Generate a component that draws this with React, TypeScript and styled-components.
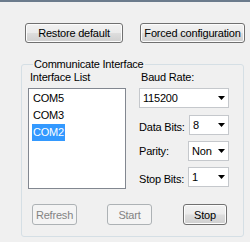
import React from "react";
import styled, { createGlobalStyle } from "styled-components";

const Global = createGlobalStyle`
  html, body { margin: 0; padding: 0; background: #f0f0f0; }
`;

const Window = styled.div`
  width: 250px;
  height: 242px;
  box-sizing: border-box;
  border-top: 2px solid #6b7b8c;
  background: #f0f0f0;
  padding: 21px 0 0 21px;
  font-family: "Liberation Sans", Arial, sans-serif;
  font-size: 11px;
  letter-spacing: -0.2px;
  color: #000;
  overflow: hidden;
`;

const TopBar = styled.div`
  display: flex;
  gap: 17px;
  padding-left: 4px;
`;

const Button = styled.button<{ $w: number; $h?: number }>`
  box-sizing: border-box;
  width: ${(p) => p.$w}px;
  height: ${(p) => p.$h ?? 20}px;
  margin: 0;
  padding: 0;
  font: inherit;
  letter-spacing: inherit;
  color: #000;
  border: 1px solid #707070;
  border-radius: 3px;
  background: linear-gradient(#f2f2f2 0%, #ebebeb 48%, #dddddd 52%, #cfcfcf 100%);
  box-shadow: inset 0 0 0 1px #fcfcfc;
  display: flex;
  align-items: center;
  justify-content: center;
  &:disabled {
    border-color: #adb2b5;
    background: #f4f4f4;
    color: #838383;
    box-shadow: none;
  }
`;

const Group = styled.fieldset`
  box-sizing: border-box;
  width: 223px;
  margin: 15px 0 0 0;
  padding: 0 0 11px 6px;
  border: 1px solid #d5dfe5;
  border-radius: 3px;
  min-width: 0;
`;

const Legend = styled.legend`
  margin-left: 5px;
  padding: 0 1px;
  line-height: 13px;
`;

const Body = styled.div`
  display: grid;
  grid-template-columns: 98px 90px;
  column-gap: 13px;
`;

const Column = styled.div`
  display: flex;
  flex-direction: column;
`;

const Caption = styled.div`
  line-height: 13px;
  height: 13px;
  padding-left: 2px;
  margin-bottom: 4px;
`;

const ListBox = styled.div`
  box-sizing: border-box;
  height: 101px;
  background: #fff;
  border: 1px solid #828790;
  padding: 1px 0 0 3px;
  display: flex;
  flex-direction: column;
  align-items: flex-start;
`;

const ListItem = styled.div<{ $selected?: boolean }>`
  line-height: 17px;
  height: 17px;
  padding: 0 1px;
  background: ${(p) => (p.$selected ? "#3399ff" : "transparent")};
  color: ${(p) => (p.$selected ? "#fff" : "#000")};
`;

const Combo = styled.div<{ $w: number }>`
  box-sizing: border-box;
  width: ${(p) => p.$w}px;
  height: 20px;
  background: #fff;
  border: 1px solid #c5c8cc;
  display: flex;
  align-items: center;
  padding-left: 3px;
`;

const ComboValue = styled.div`
  flex: 1;
  overflow: hidden;
  white-space: nowrap;
  line-height: 13px;
`;

const ComboArrow = styled.div`
  width: 16px;
  display: flex;
  justify-content: flex-end;
  padding-right: 3px;
  box-sizing: border-box;
`;

const FieldRow = styled.div<{ $gap: number }>`
  display: flex;
  justify-content: space-between;
  align-items: flex-start;
  margin-top: ${(p) => p.$gap}px;
`;

const FieldLabel = styled.div<{ $offset: number }>`
  line-height: 13px;
  padding-top: ${(p) => p.$offset}px;
`;

const ActionBar = styled.div`
  grid-column: 1 / 3;
  display: flex;
  margin-top: 15px;
  padding-left: 4px;
`;

const Spacer = styled.div<{ $w: number }>`
  width: ${(p) => p.$w}px;
`;

const Arrow = () => (
  <svg width="7" height="4" viewBox="0 0 7 4">
    <polygon points="0,0 7,0 3.5,4" fill="#000" />
  </svg>
);

const Select = ({ w, value }: { w: number; value: string }) => (
  <Combo $w={w}>
    <ComboValue>{value}</ComboValue>
    <ComboArrow>
      <Arrow />
    </ComboArrow>
  </Combo>
);

export default function App() {
  return (
    <>
      <Global />
      <Window>
        <TopBar>
          <Button $w={98}>Restore default</Button>
          <Button $w={105}>Forced configuration</Button>
        </TopBar>
        <Group>
          <Legend>Communicate Interface</Legend>
          <Body>
            <Column>
              <Caption>Interface List</Caption>
              <ListBox>
                <ListItem>COM5</ListItem>
                <ListItem>COM3</ListItem>
                <ListItem $selected>COM2</ListItem>
              </ListBox>
            </Column>
            <Column>
              <Caption>Baud Rate:</Caption>
              <Select w={90} value="115200" />
              <FieldRow $gap={7}>
                <FieldLabel $offset={6}>Data Bits:</FieldLabel>
                <Select w={40} value="8" />
              </FieldRow>
              <FieldRow $gap={6}>
                <FieldLabel $offset={4}>Parity:</FieldLabel>
                <Select w={41} value="None" />
              </FieldRow>
              <FieldRow $gap={6}>
                <FieldLabel $offset={6}>Stop Bits:</FieldLabel>
                <Select w={41} value="1" />
              </FieldRow>
            </Column>
            <ActionBar>
              <Button $w={45} $h={21} disabled>
                Refresh
              </Button>
              <Spacer $w={30} />
              <Button $w={45} $h={21} disabled>
                Start
              </Button>
              <Spacer $w={31} />
              <Button $w={44} $h={21}>
                Stop
              </Button>
            </ActionBar>
          </Body>
        </Group>
      </Window>
    </>
  );
}
